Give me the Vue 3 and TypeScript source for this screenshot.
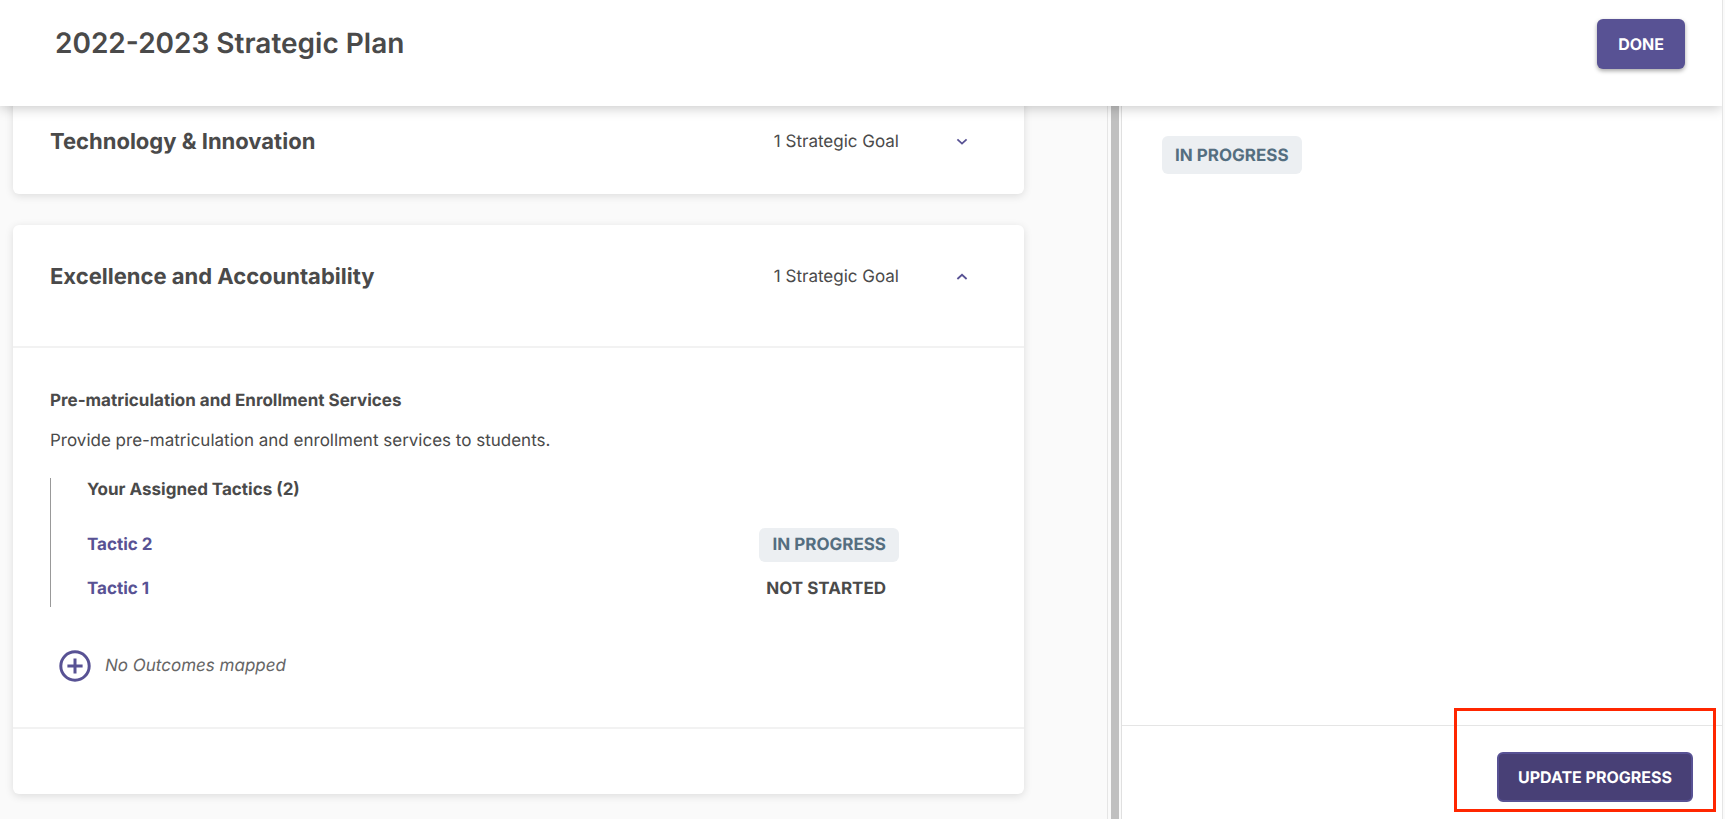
<script setup lang="ts">
import { ref } from 'vue'

interface Tactic {
  name: string
  status: string
  active: boolean
}

const technologyOpen = ref(false)
const excellenceOpen = ref(true)

const tactics: Tactic[] = [
  { name: 'Tactic 2', status: 'IN PROGRESS', active: true },
  { name: 'Tactic 1', status: 'NOT STARTED', active: false },
]
</script>

<template>
  <div class="page">
    <div class="shell">
      <header class="topbar">
        <h1>2022-2023 Strategic Plan</h1>
        <button type="button" class="btn btn-done">DONE</button>
      </header>

      <div class="split">
        <main class="plan">
          <section class="card">
            <div class="card-head">
              <h2>Technology &amp; Innovation</h2>
              <span class="count">1 Strategic Goal</span>
              <button
                type="button"
                class="toggle"
                aria-label="Toggle Technology &amp; Innovation"
                :aria-expanded="technologyOpen"
                @click="technologyOpen = !technologyOpen"
              >
                <svg width="12" height="8" viewBox="0 0 12 8" aria-hidden="true">
                  <path d="M1.4 1.4 6 5.6l4.6-4.2" />
                </svg>
              </button>
            </div>
          </section>

          <section class="card">
            <div class="card-head open">
              <h2>Excellence and Accountability</h2>
              <span class="count">1 Strategic Goal</span>
              <button
                type="button"
                class="toggle"
                aria-label="Toggle Excellence and Accountability"
                :aria-expanded="excellenceOpen"
                @click="excellenceOpen = !excellenceOpen"
              >
                <svg width="12" height="8" viewBox="0 0 12 8" aria-hidden="true">
                  <path d="M1.4 6 6 1.8l4.6 4.2" />
                </svg>
              </button>
            </div>

            <div v-if="excellenceOpen" class="card-body">
              <h3>Pre-matriculation and Enrollment Services</h3>
              <p>Provide pre-matriculation and enrollment services to students.</p>

              <div class="tactics">
                <h4>Your Assigned Tactics (2)</h4>
                <ul>
                  <li v-for="tactic in tactics" :key="tactic.name">
                    <a href="#">{{ tactic.name }}</a>
                    <span class="status" :class="{ active: tactic.active }">{{ tactic.status }}</span>
                  </li>
                </ul>
              </div>

              <div class="outcomes">
                <button type="button" class="add" aria-label="Add outcome">
                  <svg width="32" height="32" viewBox="0 0 32 32" aria-hidden="true">
                    <circle cx="16" cy="16" r="14.2" />
                    <path d="M16 8.4v15.2M8.4 16h15.2" />
                  </svg>
                </button>
                <em>No Outcomes mapped</em>
              </div>
            </div>
            <div class="card-foot"></div>
          </section>
        </main>

        <div class="divider" role="separator" aria-orientation="vertical"></div>

        <aside class="detail">
          <div class="detail-body">
            <span class="status active tall">IN PROGRESS</span>
          </div>
          <footer class="detail-foot">
            <button type="button" class="btn btn-update">UPDATE PROGRESS</button>
            <div class="callout"></div>
          </footer>
        </aside>
      </div>
    </div>
  </div>
</template>

<style>
html,
body {
  margin: 0;
  overflow: hidden;
}
</style>

<style scoped>
.page {
  box-sizing: border-box;
  height: 100vh;
  padding-right: 2px;
  background: #fafafa;
  color: #4a4a4a;
  font-family: Inter, "Liberation Sans", sans-serif;
  font-size: 17px;
  line-height: 24px;
  text-rendering: geometricPrecision;
}

.page *,
.page *::before {
  box-sizing: border-box;
}

.shell {
  display: flex;
  flex-direction: column;
  height: 100%;
  border-right: 1px solid #e5e5e5;
}

h1,
h2,
h3,
h4,
p,
ul {
  margin: 0;
  padding: 0;
}

button {
  padding: 0;
  border: 0;
  background: none;
  font-family: inherit;
  text-rendering: inherit;
  cursor: pointer;
}

.topbar {
  position: relative;
  z-index: 1;
  display: flex;
  flex: none;
  align-items: flex-start;
  justify-content: space-between;
  height: 106px;
  padding: 19px 37px 0 55px;
  background: #fff;
  box-shadow: 0 2px 12px rgba(0, 0, 0, 0.22);
  clip-path: inset(0 0 -20px 0);
}

h1 {
  font-size: 28px;
  font-weight: 600;
  line-height: 48px;
}

.btn {
  height: 50px;
  border-radius: 6px;
  color: #fff;
  font-size: 16px;
  font-weight: 700;
  line-height: 20px;
}

.btn-done {
  padding: 0 21px;
  background: #585294;
  box-shadow: 0 2px 4px rgba(0, 0, 0, 0.35);
}

.btn-update {
  padding: 0 19px;
  border: 2px solid #585294;
  background: #484076;
}

.split {
  display: grid;
  flex: 1;
  grid-template-columns: 1107fr 15px 600fr;
  min-height: 0;
}

.plan {
  display: flex;
  flex-direction: column;
  gap: 31px;
  min-width: 0;
  padding: 0 83px 24px 13px;
  overflow: hidden;
}

.card {
  flex: none;
  border-radius: 6px;
  background: #fff;
  box-shadow: 0 2px 8px rgba(0, 0, 0, 0.12);
}

.card:first-child {
  margin-top: -17px;
}

.card-head {
  display: grid;
  grid-template-columns: 1fr auto 125px;
  align-items: center;
  height: 105px;
  padding-left: 37px;
}

.card-head.open {
  height: 123px;
  padding-bottom: 18px;
  border-bottom: 2px solid #f2f2f2;
}

h2 {
  font-size: 22px;
  font-weight: 700;
  line-height: 32px;
}

.toggle {
  display: grid;
  width: 24px;
  height: 24px;
  margin-left: 51px;
  place-items: center;
}

.toggle svg {
  display: block;
  fill: none;
  stroke: #585294;
  stroke-width: 1.8;
}

.card-body {
  padding: 41px 125px 45px 37px;
}

h3,
h4 {
  font-size: 17px;
  font-weight: 700;
  line-height: 24px;
}

p {
  margin-top: 16px;
}

.tactics {
  margin-top: 25px;
  padding-bottom: 1px;
  padding-left: 36px;
  border-left: 1px solid #999;
}

ul {
  display: grid;
  gap: 10px;
  padding-top: 26px;
  list-style: none;
}

li {
  display: flex;
  align-items: center;
  justify-content: space-between;
}

li a {
  color: #585294;
  font-weight: 700;
  text-decoration: none;
}

.status {
  display: inline-block;
  padding: 5px 13px;
  border-radius: 6px;
  font-weight: 700;
}

.status.active {
  background: #eceff2;
  color: #546e80;
}

.status.tall {
  padding: 8px 13px 6px;
}

.outcomes {
  display: flex;
  align-items: center;
  gap: 14px;
  margin-top: 43px;
  padding-left: 9px;
  color: #666;
}

.add svg {
  display: block;
  fill: none;
  stroke: #585294;
  stroke-width: 3;
}

.card-foot {
  height: 67px;
  border-top: 2px solid #f2f2f2;
}

.divider {
  display: flex;
  padding: 0 2px 0 3px;
  border-right: 1px solid #e0e0e0;
  border-left: 1px solid #e5e5e5;
}

.divider::before {
  content: "";
  flex: 1;
  background: #c0c0c0;
}

.detail {
  display: flex;
  flex-direction: column;
  min-width: 0;
  background: #fff;
}

.detail-body {
  flex: 1;
  padding: 30px 40px;
}

.detail-foot {
  position: relative;
  display: flex;
  justify-content: flex-end;
  height: 94px;
  padding: 26px 29px 0 0;
  border-top: 1px solid #e5e5e5;
}

.callout {
  position: absolute;
  top: -18px;
  right: 6px;
  width: 262px;
  height: 104px;
  border: 3px solid #ff2600;
  pointer-events: none;
}
</style>
